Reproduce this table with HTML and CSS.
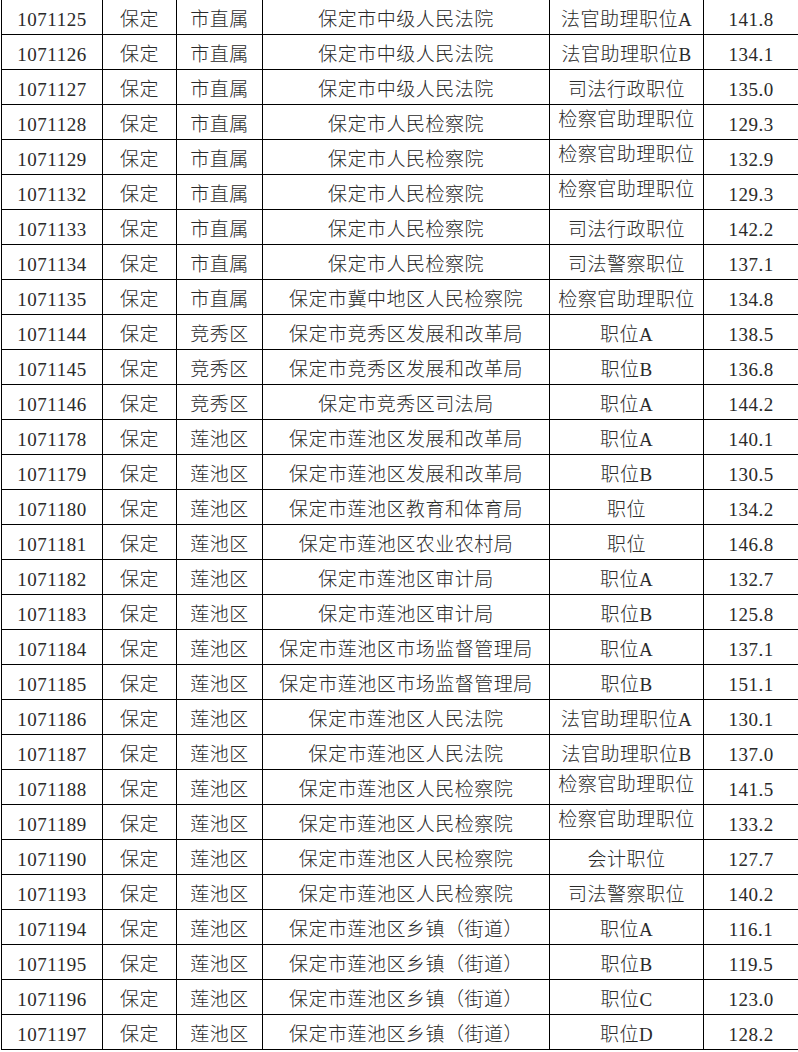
FILE: index.html
```
<!DOCTYPE html>
<html lang="zh-CN">
<head>
<meta charset="utf-8">
<title>保定 职位分数线</title>
<link rel="stylesheet" href="styles.css">
</head>
<body>
<table class="grid">
<colgroup>
<col class="c-code"><col class="c-city"><col class="c-area"><col class="c-dept"><col class="c-pos"><col class="c-score">
</colgroup>
<tbody>
<tr><td>1071125</td><td>保定</td><td>市直属</td><td>保定市中级人民法院</td><td>法官助理职位A</td><td>141.8</td></tr>
<tr><td>1071126</td><td>保定</td><td>市直属</td><td>保定市中级人民法院</td><td>法官助理职位B</td><td>134.1</td></tr>
<tr><td>1071127</td><td>保定</td><td>市直属</td><td>保定市中级人民法院</td><td>司法行政职位</td><td>135.0</td></tr>
<tr><td>1071128</td><td>保定</td><td>市直属</td><td>保定市人民检察院</td><td class="hi">检察官助理职位</td><td>129.3</td></tr>
<tr><td>1071129</td><td>保定</td><td>市直属</td><td>保定市人民检察院</td><td class="hi">检察官助理职位</td><td>132.9</td></tr>
<tr><td>1071132</td><td>保定</td><td>市直属</td><td>保定市人民检察院</td><td class="hi">检察官助理职位</td><td>129.3</td></tr>
<tr><td>1071133</td><td>保定</td><td>市直属</td><td>保定市人民检察院</td><td>司法行政职位</td><td>142.2</td></tr>
<tr><td>1071134</td><td>保定</td><td>市直属</td><td>保定市人民检察院</td><td>司法警察职位</td><td>137.1</td></tr>
<tr><td>1071135</td><td>保定</td><td>市直属</td><td>保定市冀中地区人民检察院</td><td>检察官助理职位</td><td>134.8</td></tr>
<tr><td>1071144</td><td>保定</td><td>竞秀区</td><td>保定市竞秀区发展和改革局</td><td>职位A</td><td>138.5</td></tr>
<tr><td>1071145</td><td>保定</td><td>竞秀区</td><td>保定市竞秀区发展和改革局</td><td>职位B</td><td>136.8</td></tr>
<tr><td>1071146</td><td>保定</td><td>竞秀区</td><td>保定市竞秀区司法局</td><td>职位A</td><td>144.2</td></tr>
<tr><td>1071178</td><td>保定</td><td>莲池区</td><td>保定市莲池区发展和改革局</td><td>职位A</td><td>140.1</td></tr>
<tr><td>1071179</td><td>保定</td><td>莲池区</td><td>保定市莲池区发展和改革局</td><td>职位B</td><td>130.5</td></tr>
<tr><td>1071180</td><td>保定</td><td>莲池区</td><td>保定市莲池区教育和体育局</td><td>职位</td><td>134.2</td></tr>
<tr><td>1071181</td><td>保定</td><td>莲池区</td><td>保定市莲池区农业农村局</td><td>职位</td><td>146.8</td></tr>
<tr><td>1071182</td><td>保定</td><td>莲池区</td><td>保定市莲池区审计局</td><td>职位A</td><td>132.7</td></tr>
<tr><td>1071183</td><td>保定</td><td>莲池区</td><td>保定市莲池区审计局</td><td>职位B</td><td>125.8</td></tr>
<tr><td>1071184</td><td>保定</td><td>莲池区</td><td>保定市莲池区市场监督管理局</td><td>职位A</td><td>137.1</td></tr>
<tr><td>1071185</td><td>保定</td><td>莲池区</td><td>保定市莲池区市场监督管理局</td><td>职位B</td><td>151.1</td></tr>
<tr><td>1071186</td><td>保定</td><td>莲池区</td><td>保定市莲池区人民法院</td><td>法官助理职位A</td><td>130.1</td></tr>
<tr><td>1071187</td><td>保定</td><td>莲池区</td><td>保定市莲池区人民法院</td><td>法官助理职位B</td><td>137.0</td></tr>
<tr><td>1071188</td><td>保定</td><td>莲池区</td><td>保定市莲池区人民检察院</td><td class="hi">检察官助理职位</td><td>141.5</td></tr>
<tr><td>1071189</td><td>保定</td><td>莲池区</td><td>保定市莲池区人民检察院</td><td class="hi">检察官助理职位</td><td>133.2</td></tr>
<tr><td>1071190</td><td>保定</td><td>莲池区</td><td>保定市莲池区人民检察院</td><td>会计职位</td><td>127.7</td></tr>
<tr><td>1071193</td><td>保定</td><td>莲池区</td><td>保定市莲池区人民检察院</td><td>司法警察职位</td><td>140.2</td></tr>
<tr><td>1071194</td><td>保定</td><td>莲池区</td><td>保定市莲池区乡镇（街道）</td><td>职位A</td><td>116.1</td></tr>
<tr><td>1071195</td><td>保定</td><td>莲池区</td><td>保定市莲池区乡镇（街道）</td><td>职位B</td><td>119.5</td></tr>
<tr><td>1071196</td><td>保定</td><td>莲池区</td><td>保定市莲池区乡镇（街道）</td><td>职位C</td><td>123.0</td></tr>
<tr><td>1071197</td><td>保定</td><td>莲池区</td><td>保定市莲池区乡镇（街道）</td><td>职位D</td><td>128.2</td></tr>
</tbody>
</table>
</body>
</html>
```
FILE: styles.css
```
html, body {
  margin: 0;
  padding: 0;
  background: #fff;
}
body {
  overflow: hidden;
}
.grid {
  border-collapse: collapse;
  table-layout: fixed;
  width: 797px;
  margin: -1px 0 0 1px;
  font-family: "Liberation Serif", "Noto Sans CJK SC", serif;
  font-size: 19px;
  font-weight: 300;
  letter-spacing: 0.5px;
  color: #2a2a2a;
}
.c-code { width: 101px; }
.c-city { width: 74px; }
.c-area { width: 86px; }
.c-dept { width: 287px; }
.c-pos { width: 154px; }
.c-score { width: 95px; }
.grid td {
  border: 1px solid #000;
  padding: 6px 0 0 0;
  height: 28px;
  line-height: 28px;
  text-align: center;
  white-space: nowrap;
  overflow: hidden;
  box-sizing: border-box;
}
.grid td.hi {
  padding-top: 1px;
  line-height: 28px;
  vertical-align: top;
}
```
